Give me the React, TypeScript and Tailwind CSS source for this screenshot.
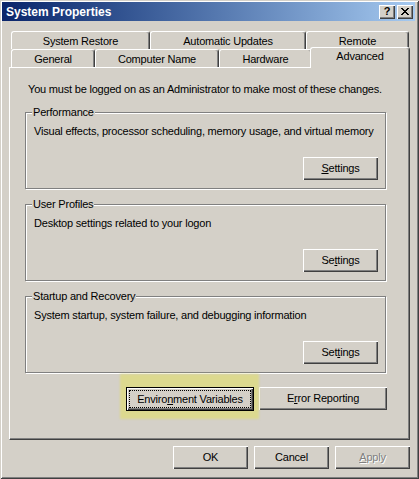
import React from "react";

const bevel =
  "shadow-[inset_1px_1px_0_#ffffff,inset_-1px_-1px_0_#404040,inset_-2px_-2px_0_#808080]";

function PushButton({
  children,
  width,
  disabled,
}: {
  children: React.ReactNode;
  width: string;
  disabled?: boolean;
}) {
  return (
    <div
      className={`${width} h-[23px] flex items-center justify-center bg-[#d4d0c8] leading-[13px] ${bevel} ${
        disabled ? "text-[#808080] [text-shadow:1px_1px_0_#ffffff]" : "text-black"
      }`}
    >
      <span>{children}</span>
    </div>
  );
}

function DefaultButton({ children }: { children: React.ReactNode }) {
  return (
    <div className="relative w-[128px] h-[24px]">
      {/* soft yellow marker behind the focused button */}
      <div className="absolute -left-[6px] -top-[13px] -right-[5px] -bottom-[8px] bg-[#dcd98f] blur-[1px]" />
      <div className="relative w-full h-full border border-black bg-[#d4d0c8]">
        <div className={`relative w-full h-full flex items-center justify-center leading-[13px] ${bevel}`}>
          <span className="absolute inset-[2px] border border-dotted border-black" />
          <span>{children}</span>
        </div>
      </div>
    </div>
  );
}

function Tab({
  label,
  width,
  selected,
}: {
  label: string;
  width: string;
  selected?: boolean;
}) {
  return (
    <div
      className={`${width} ${
        selected ? "relative z-10 h-[21px] -ml-[2px] -mb-[1px] pb-[3px]" : "h-[18px] pt-[1px]"
      } flex items-center justify-center bg-[#d4d0c8] border-l border-t border-white border-r border-r-[#404040] rounded-tl-[3px] rounded-tr-[3px] shadow-[inset_-1px_0_0_#808080] leading-[13px]`}
    >
      {label}
    </div>
  );
}

function Group({
  title,
  text,
  button,
  first,
}: {
  title: string;
  text: string;
  button: React.ReactNode;
  first?: boolean;
}) {
  return (
    <div
      className={`relative ${first ? "mt-[16px]" : "mt-[15px]"} w-[361px] h-[77px] flex flex-col border border-[#808080] shadow-[inset_1px_1px_0_#ffffff,1px_1px_0_#ffffff] pl-[8px] pt-[12px] pr-[7px] pb-[8px]`}
    >
      <span className="absolute left-[6px] -top-[7px] px-[1px] bg-[#d4d0c8] leading-[13px]">{title}</span>
      <div className="leading-[13px]">{text}</div>
      <div className="mt-auto flex justify-end">
        <PushButton width="w-[75px]">{button}</PushButton>
      </div>
    </div>
  );
}

function CloseGlyph() {
  const cells: [number, number, number][] = [
    [0, 0, 2], [6, 0, 2],
    [1, 1, 2], [5, 1, 2],
    [2, 2, 4],
    [3, 3, 2],
    [2, 4, 4],
    [1, 5, 2], [5, 5, 2],
    [0, 6, 2], [6, 6, 2],
  ];
  return (
    <svg width="8" height="7" viewBox="0 0 8 7" shapeRendering="crispEdges">
      {cells.map(([x, y, w], i) => (
        <rect key={i} x={x} y={y} width={w} height={1} fill="#000" />
      ))}
    </svg>
  );
}

export default function App() {
  return (
    <div className="w-[419px] h-[479px] overflow-hidden bg-[#d4d0c8] font-['Liberation_Sans',Arial,sans-serif] text-[11px] tracking-[-0.2px] text-black flex flex-col pl-[2px] pt-[2px] shadow-[inset_1px_1px_0_#d4d0c8,inset_-1px_-1px_0_#404040,inset_2px_2px_0_#ffffff,inset_-2px_-2px_0_#808080]">
      {/* caption bar */}
      <div className="w-[413px] h-[19px] flex items-center pl-[4px] pr-[2px] bg-linear-to-r from-[#0a246a] to-[#a6caf0]">
        <span className="text-white font-bold text-[12px] tracking-normal leading-[14px]">System Properties</span>
        <div className="ml-auto flex gap-[2px]">
          <div className={`w-[16px] h-[14px] bg-[#d4d0c8] flex items-center justify-center ${bevel}`}>
            <span className="font-bold text-[11px] leading-[11px] tracking-normal pb-[1px]">?</span>
          </div>
          <div className={`w-[16px] h-[14px] bg-[#d4d0c8] flex items-center justify-center pb-[1px] ${bevel}`}>
            <CloseGlyph />
          </div>
        </div>
      </div>

      {/* tab strip */}
      <div className="mt-[10px] ml-[9px] flex flex-col">
        <div className="flex">
          <Tab label="System Restore" width="w-[139px]" />
          <Tab label="Automatic Updates" width="w-[156px]" />
          <Tab label="Remote" width="w-[103px]" />
        </div>
        <div className="flex items-end h-[18px]">
          <Tab label="General" width="w-[84px]" />
          <Tab label="Computer Name" width="w-[124px]" />
          <Tab label="Hardware" width="w-[93px]" />
          <Tab label="Advanced" width="w-[100px]" selected />
        </div>
      </div>

      {/* tab page */}
      <div className="ml-[7px] w-[401px] h-[373px] flex flex-col border border-white border-r-[#404040] border-b-[#404040] shadow-[inset_-1px_-1px_0_#808080] pl-[15px] pt-[15px]">
        <div className="ml-[3px] leading-[13px]">
          You must be logged on as an Administrator to make most of these changes.
        </div>

        <Group
          first
          title="Performance"
          text="Visual effects, processor scheduling, memory usage, and virtual memory"
          button={
            <>
              <u>S</u>ettings
            </>
          }
        />
        <Group
          title="User Profiles"
          text="Desktop settings related to your logon"
          button={
            <>
              Se<u>t</u>tings
            </>
          }
        />
        <Group
          title="Startup and Recovery"
          text="System startup, system failure, and debugging information"
          button={
            <>
              Set<u>t</u>ings
            </>
          }
        />

        <div className="mt-[14px] ml-[101px] flex items-start gap-[5px]">
          <DefaultButton>
            Enviro<u>n</u>ment Variables
          </DefaultButton>
          <PushButton width="w-[128px]">
            E<u>r</u>ror Reporting
          </PushButton>
        </div>
      </div>

      {/* dialog buttons */}
      <div className="mt-[6px] ml-[7px] w-[401px] flex justify-end gap-[6px]">
        <PushButton width="w-[75px]">OK</PushButton>
        <PushButton width="w-[75px]">Cancel</PushButton>
        <PushButton width="w-[75px]" disabled>
          <u>A</u>pply
        </PushButton>
      </div>
    </div>
  );
}
